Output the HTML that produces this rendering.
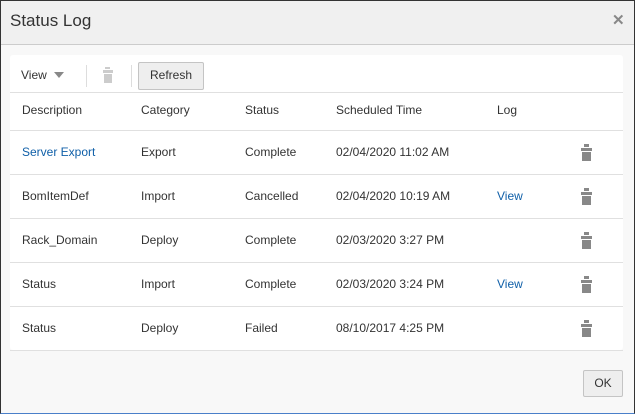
<!DOCTYPE html><html><head><style>
body{margin:0;width:635px;height:414px;overflow:hidden;font-family:"Liberation Sans",sans-serif;font-size:12px;color:#333}
.d{position:absolute;left:0;top:0;width:633px;height:412px;border:1px solid #333;border-bottom:1px solid #4a7fc9;background:#f8f8f8}
.h{height:43px;background:#f0f0f0;border-bottom:1px solid #ccc;position:relative}
.h .t{position:absolute;left:9px;top:10px;font-size:17px;color:#333}
.h .x{position:absolute;left:611px;top:10px;font-size:15px;color:#888;font-weight:bold}
.p{position:absolute;left:9px;top:54px;width:613px;height:295px;background:#fff;border-radius:3px}
.tb{height:37px;border-bottom:1px solid #e0e0e0;position:relative}
.r{position:absolute;left:0;width:613px;height:43px;border-bottom:1px solid #e0e0e0}
.r span{position:absolute;top:14px}
a{color:#0f5fa8;text-decoration:none}
.tr{position:absolute;left:571px;top:13px}
.btn{position:absolute;background:#eee;border:1px solid #c4c4c4;border-radius:2px;text-align:center;color:#333}
</style></head><body><div class="d">
<div class="h"><span class="t">Status Log</span><span class="x">✕</span></div>
<div class="p">
<div class="tb">
<span style="position:absolute;left:11px;top:13px">View</span>
<svg style="position:absolute;left:44px;top:17px" width="10" height="6"><path d="M0 0H10L5 6Z" fill="#888"/></svg>
<div style="position:absolute;left:76px;top:10px;width:1px;height:22px;background:#ddd"></div>
<svg style="position:absolute;left:92px;top:12px" width="12" height="16"><rect x="3" y="0" width="5" height="2" fill="#ccc"/><rect x="1" y="3" width="10" height="3" fill="#ccc"/><rect x="2" y="7" width="8" height="9" fill="#ccc"/></svg>
<div style="position:absolute;left:121px;top:10px;width:1px;height:22px;background:#ddd"></div>
<div class="btn" style="left:128px;top:7px;width:64px;height:26px;line-height:25px">Refresh</div>
</div>
<div class="r" style="top:38px;height:37px"><span style="left:12px;top:10px">Description</span><span style="left:131px;top:10px">Category</span><span style="left:235px;top:10px">Status</span><span style="left:326px;top:10px">Scheduled Time</span><span style="left:487px;top:10px">Log</span></div>
<div class="r" style="top:76px"><span style="left:12px"><a>Server Export</a></span><span style="left:131px">Export</span><span style="left:235px">Complete</span><span style="left:326px">02/04/2020 11:02 AM</span><svg class="tr" width="12" height="17"><rect x="3" y="0" width="5" height="3" fill="#888"/><rect x="0" y="4" width="11" height="3" fill="#888"/><rect x="1" y="8" width="9" height="9" fill="#888"/></svg></div>
<div class="r" style="top:120px"><span style="left:12px">BomItemDef</span><span style="left:131px">Import</span><span style="left:235px">Cancelled</span><span style="left:326px">02/04/2020 10:19 AM</span><span style="left:487px"><a>View</a></span><svg class="tr" width="12" height="17"><rect x="3" y="0" width="5" height="3" fill="#888"/><rect x="0" y="4" width="11" height="3" fill="#888"/><rect x="1" y="8" width="9" height="9" fill="#888"/></svg></div>
<div class="r" style="top:164px"><span style="left:12px">Rack_Domain</span><span style="left:131px">Deploy</span><span style="left:235px">Complete</span><span style="left:326px">02/03/2020 3:27 PM</span><svg class="tr" width="12" height="17"><rect x="3" y="0" width="5" height="3" fill="#888"/><rect x="0" y="4" width="11" height="3" fill="#888"/><rect x="1" y="8" width="9" height="9" fill="#888"/></svg></div>
<div class="r" style="top:208px"><span style="left:12px">Status</span><span style="left:131px">Import</span><span style="left:235px">Complete</span><span style="left:326px">02/03/2020 3:24 PM</span><span style="left:487px"><a>View</a></span><svg class="tr" width="12" height="17"><rect x="3" y="0" width="5" height="3" fill="#888"/><rect x="0" y="4" width="11" height="3" fill="#888"/><rect x="1" y="8" width="9" height="9" fill="#888"/></svg></div>
<div class="r" style="top:252px"><span style="left:12px">Status</span><span style="left:131px">Deploy</span><span style="left:235px">Failed</span><span style="left:326px">08/10/2017 4:25 PM</span><svg class="tr" width="12" height="17"><rect x="3" y="0" width="5" height="3" fill="#888"/><rect x="0" y="4" width="11" height="3" fill="#888"/><rect x="1" y="8" width="9" height="9" fill="#888"/></svg></div>
</div>
<div class="btn" style="left:582px;top:369px;width:38px;height:25px;line-height:25px">OK</div>
</div></body></html>
